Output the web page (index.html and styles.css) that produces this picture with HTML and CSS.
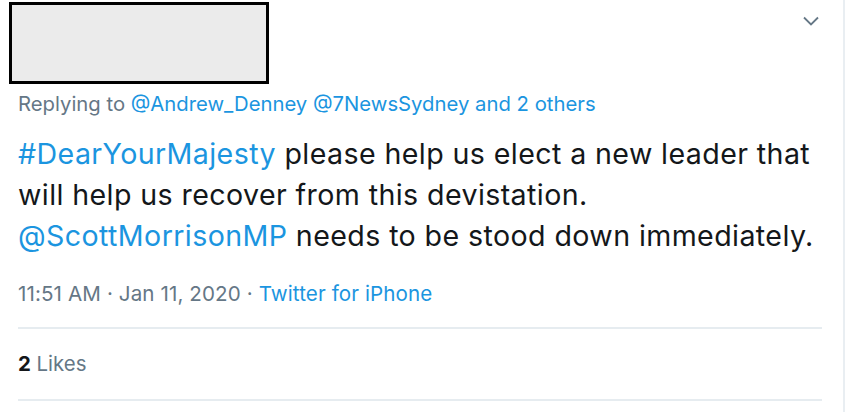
FILE: index.html
```html
<!DOCTYPE html>
<html>
<head>
<meta charset="utf-8">
<link rel="stylesheet" href="styles.css">
</head>
<body>
<div class="page">
  <div class="tweet">
    <div class="top">
      <div class="redacted"></div>
      <svg class="chevron" width="16" height="10" viewBox="0 0 16 10"><path d="M1 1.5 L8 8.5 L15 1.5" fill="none" stroke="#657786" stroke-width="1.8"/></svg>
    </div>
    <div class="replying">Replying to <span class="link">@Andrew_Denney</span> <span class="link">@7NewsSydney</span> <span class="link">and 2 others</span></div>
    <div class="text"><span class="link">#DearYourMajesty</span> please help us elect a new leader that will help us recover from this devistation.<br><span class="link">@ScottMorrisonMP</span> needs to be stood down immediately.</div>
    <div class="meta">11:51 AM · Jan 11, 2020 · <span class="link">Twitter for iPhone</span></div>
    <div class="stats"><b>2</b> Likes</div>
  </div>
  <div class="edge"></div>
</div>
</body>
</html>
```

FILE: styles.css
```css
html, body {
  margin: 0;
  padding: 0;
  background: #fff;
}
body {
  font-family: Inter, "Liberation Sans", Arial, sans-serif;
  color: #14171a;
}
.page {
  display: flex;
  width: 850px;
  height: 412px;
  overflow: hidden;
}
.tweet {
  width: 804px;
  padding-left: 18px;
  padding-right: 21px;
  flex: none;
}
.edge {
  width: 2px;
  height: 412px;
  background: #e9eef2;
}
.top {
  display: flex;
  justify-content: space-between;
  align-items: flex-start;
}
.redacted {
  width: 254px;
  height: 76px;
  margin-left: -9px;
  margin-top: 2px;
  border: 3px solid #000;
  background: #ebebeb;
}
.chevron {
  margin-top: 16px;
  margin-right: 3px;
}
.link {
  color: #1b95e0;
}
.replying {
  margin-top: 8px;
  font-size: 20.3px;
  line-height: 24px;
  color: #657786;
}
.text {
  margin-top: 17px;
  font-size: 28.6px;
  letter-spacing: 0.4px;
  line-height: 41px;
  color: #14171a;
}
.meta {
  margin-top: 26px;
  font-size: 20.6px;
  letter-spacing: 0.1px;
  line-height: 24px;
  color: #657786;
  padding-bottom: 21px;
  border-bottom: 2px solid #e6ecf0;
}
.stats {
  font-size: 20.4px;
  line-height: 24px;
  color: #657786;
  padding: 23px 0 23px;
  border-bottom: 2px solid #e6ecf0;
}
.stats b {
  color: #14171a;
}
```
